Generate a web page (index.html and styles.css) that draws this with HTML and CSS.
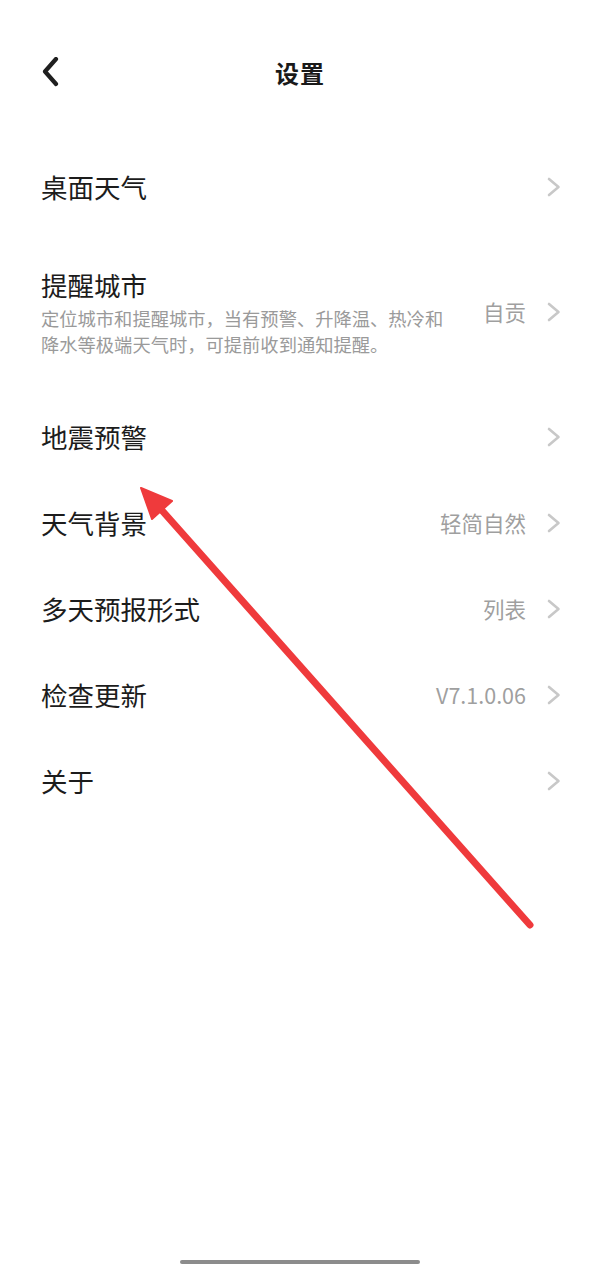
FILE: index.html
```html
<!DOCTYPE html>
<html lang="zh-CN">
<head>
<meta charset="utf-8">
<link rel="stylesheet" href="styles.css">
</head>
<body>
<div class="page">
  <header class="header">
    <svg class="back" width="20" height="30" viewBox="0 0 20 30"><path d="M16 2 L5 14.5 L16 27" fill="none" stroke="#1f1f1f" stroke-width="4.2" stroke-linecap="round" stroke-linejoin="round"/></svg>
    <h1 class="title">设置</h1>
  </header>
  <ul class="list">
    <li class="row"><div class="main"><span class="label">桌面天气</span></div><svg class="chev" width="16" height="22" viewBox="0 0 16 22"><path d="M3 3 L12.5 11 L3 19" fill="none" stroke="#c8c8c8" stroke-width="2.6" stroke-linecap="round" stroke-linejoin="round"/></svg></li>
    <li class="row row-tall"><div class="main"><span class="label">提醒城市</span><p class="desc">定位城市和提醒城市，当有预警、升降温、热冷和降水等极端天气时，可提前收到通知提醒。</p></div><span class="value">自贡</span><svg class="chev" width="16" height="22" viewBox="0 0 16 22"><path d="M3 3 L12.5 11 L3 19" fill="none" stroke="#c8c8c8" stroke-width="2.6" stroke-linecap="round" stroke-linejoin="round"/></svg></li>
    <li class="row"><div class="main"><span class="label">地震预警</span></div><svg class="chev" width="16" height="22" viewBox="0 0 16 22"><path d="M3 3 L12.5 11 L3 19" fill="none" stroke="#c8c8c8" stroke-width="2.6" stroke-linecap="round" stroke-linejoin="round"/></svg></li>
    <li class="row"><div class="main"><span class="label">天气背景</span></div><span class="value">轻简自然</span><svg class="chev" width="16" height="22" viewBox="0 0 16 22"><path d="M3 3 L12.5 11 L3 19" fill="none" stroke="#c8c8c8" stroke-width="2.6" stroke-linecap="round" stroke-linejoin="round"/></svg></li>
    <li class="row"><div class="main"><span class="label">多天预报形式</span></div><span class="value">列表</span><svg class="chev" width="16" height="22" viewBox="0 0 16 22"><path d="M3 3 L12.5 11 L3 19" fill="none" stroke="#c8c8c8" stroke-width="2.6" stroke-linecap="round" stroke-linejoin="round"/></svg></li>
    <li class="row"><div class="main"><span class="label">检查更新</span></div><span class="value">V7.1.0.06</span><svg class="chev" width="16" height="22" viewBox="0 0 16 22"><path d="M3 3 L12.5 11 L3 19" fill="none" stroke="#c8c8c8" stroke-width="2.6" stroke-linecap="round" stroke-linejoin="round"/></svg></li>
    <li class="row"><div class="main"><span class="label">关于</span></div><svg class="chev" width="16" height="22" viewBox="0 0 16 22"><path d="M3 3 L12.5 11 L3 19" fill="none" stroke="#c8c8c8" stroke-width="2.6" stroke-linecap="round" stroke-linejoin="round"/></svg></li>
  </ul>
  <div class="home-bar"></div>
  <svg class="arrow" width="600" height="1266" viewBox="0 0 600 1266">
    <line x1="158" y1="506" x2="530" y2="925" stroke="#ef3a3c" stroke-width="7" stroke-linecap="round"/>
    <polygon points="141,488 172,501 152,519" fill="#ef3a3c" stroke="#ef3a3c" stroke-width="2" stroke-linejoin="round"/>
  </svg>
</div>
</body>
</html>
```
FILE: styles.css
```css
* { box-sizing: border-box; }
html, body { margin: 0; padding: 0; background: #fff; }
body {
  font-family: "Noto Sans CJK SC", "Noto Sans", sans-serif;
  color: #1c1c1c;
}
.page {
  position: relative;
  width: 600px;
  height: 1266px;
  overflow: hidden;
}
.header {
  position: relative;
  height: 144px;
  display: flex;
  justify-content: center;
  padding-top: 54px;
}
.back {
  position: absolute;
  left: 40px;
  top: 57px;
}
.title {
  margin: 0;
  font-size: 24px;
  line-height: 38px;
  font-weight: 700;
  letter-spacing: 1px;
  color: #1a1a1a;
}
.list {
  list-style: none;
  margin: 0;
  padding: 0;
}
.row {
  display: flex;
  align-items: center;
  height: 86px;
  padding: 0 38px 0 41px;
}
.row-tall {
  height: 164px;
}
.main {
  flex: 1;
  min-width: 0;
  display: flex;
  flex-direction: column;
}
.label {
  font-size: 26.5px;
  line-height: 36px;
  color: #1c1c1c;
}
.desc {
  margin: 2px 0 0;
  width: 410px;
  font-size: 18.3px;
  line-height: 26px;
  color: #9a9a9a;
}
.value {
  font-size: 21.5px;
  line-height: 30px;
  color: #9f9f9f;
  margin-right: 20px;
}
.chev {
  display: block;
  flex: none;
}
.home-bar {
  position: absolute;
  left: 180px;
  top: 1260px;
  width: 240px;
  height: 4px;
  border-radius: 2px;
  background: #8c8c8c;
}
.arrow {
  position: absolute;
  left: 0;
  top: 0;
  pointer-events: none;
}
```
